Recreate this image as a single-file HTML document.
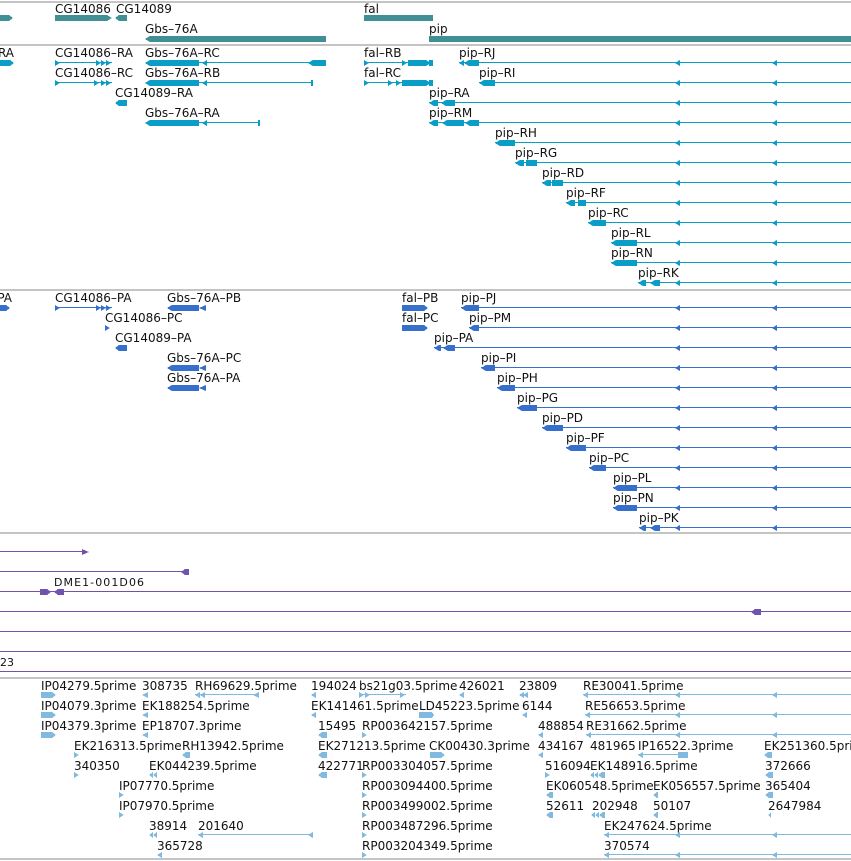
<!DOCTYPE html>
<html><head><meta charset="utf-8"><style>
html,body{margin:0;padding:0;background:#fff;width:851px;height:861px;overflow:hidden}
svg{display:block}
text{font-family:"DejaVu Sans","Liberation Sans",sans-serif;font-size:12px;fill:#111}
</style></head><body>
<svg width="851" height="861" viewBox="0 0 851 861" xmlns="http://www.w3.org/2000/svg" shape-rendering="crispEdges">
<g fill="#c4c4c4">
<rect x="0" y="1" width="851" height="2"/>
<rect x="0" y="44" width="851" height="2"/>
<rect x="0" y="289" width="851" height="2"/>
<rect x="0" y="532" width="851" height="2"/>
<rect x="0" y="677" width="851" height="2"/>
<rect x="0" y="858" width="851" height="2"/>
</g>

<g fill="#3f8f94">
<polygon points="0,15 9,15 13,18 9,21 0,21"/>
<polygon points="55,15 107,15 112,18 107,21 55,21"/>
<polygon points="115,18 119,15 127,15 127,21 119,21"/>
<polygon points="145,39 150,36 326,36 326,42 150,42"/>
<rect x="364" y="15" width="69" height="6"/>
<rect x="429" y="36" width="422" height="6"/>
</g>
<text x="55" y="13">CG14086</text>
<text x="116" y="13">CG14089</text>
<text x="145" y="33">Gbs–76A</text>
<text x="364" y="13">fal</text>
<text x="429" y="33">pip</text>

<g fill="#0a9dc5">
<polygon points="0,60 10,60 14,63 10,66 0,66"/>
<rect x="55" y="62" width="57" height="1"/><polygon points="55,60 60,63 55,66"/>
<polygon points="96,60 101,63 96,66"/><polygon points="101,60 106,63 101,66"/><polygon points="106,60 111,63 106,66"/>
<rect x="55" y="82" width="57" height="1"/><polygon points="55,80 60,83 55,86"/>
<polygon points="94,80 99,83 94,86"/><polygon points="101,80 106,83 101,86"/><polygon points="106,80 111,83 106,86"/>
<polygon points="145,63 150,60 199,60 199,66 150,66"/><rect x="199" y="62" width="110" height="1"/><polygon points="202,63 207,60 207,66"/>
<polygon points="308,63 313,60 326,60 326,66 313,66"/>
<polygon points="145,83 150,80 199,80 199,86 150,86"/><rect x="199" y="82" width="113" height="1"/><polygon points="202,83 207,80 207,86"/><rect x="311" y="80" width="2" height="6"/>
<polygon points="115,103 119,100 127,100 127,106 119,106"/>
<polygon points="145,123 150,120 199,120 199,126 150,126"/><rect x="199" y="122" width="60" height="1"/><polygon points="202,123 207,120 207,126"/><rect x="258" y="120" width="2" height="6"/>
<rect x="364" y="62" width="69" height="1"/><polygon points="364,60 369,63 364,66"/><polygon points="402,60 407,63 402,66"/><rect x="408" y="60" width="18" height="6"/><polygon points="426,60 431,63 426,66"/>
<rect x="364" y="82" width="69" height="1"/><polygon points="364,80 369,83 364,86"/><polygon points="388,80 393,83 388,86"/><polygon points="396,80 401,83 396,86"/><rect x="402" y="80" width="24" height="6"/><polygon points="426,80 431,83 426,86"/>
<rect x="429" y="60" width="4" height="6"/><rect x="429" y="80" width="4" height="6"/>
</g>
<g fill="#0a9dc5">
<rect x="459" y="62" width="392" height="1"/><polygon points="459,63 464,60 464,66"/><polygon points="464,63 469,60 469,66"/><rect x="469" y="60" width="10" height="6"/>
<rect x="479" y="82" width="372" height="1"/><polygon points="479,83 484,80 484,86"/><rect x="484" y="80" width="11" height="6"/>
<rect x="429" y="102" width="422" height="1"/><polygon points="429,103 434,100 438,100 438,106 434,106"/><polygon points="441,103 446,100 455,100 455,106 446,106"/>
<rect x="429" y="122" width="422" height="1"/><polygon points="429,123 434,120 438,120 438,126 434,126"/><polygon points="442,123 447,120 464,120 464,126 447,126"/><polygon points="465,123 470,120 479,120 479,126 470,126"/>
<rect x="495" y="142" width="356" height="1"/><polygon points="495,143 500,140 504,140 504,146 500,146"/><rect x="504" y="140" width="11" height="6"/>
<rect x="515" y="162" width="336" height="1"/><polygon points="515,163 520,160 524,160 524,166 520,166"/><rect x="526" y="160" width="11" height="6"/>
<rect x="542" y="182" width="309" height="1"/><polygon points="542,183 547,180 551,180 551,186 547,186"/><rect x="552" y="180" width="11" height="6"/>
<rect x="566" y="202" width="285" height="1"/><polygon points="566,203 571,200 575,200 575,206 571,206"/><rect x="578" y="200" width="8" height="6"/>
<rect x="588" y="222" width="263" height="1"/><polygon points="588,223 593,220 606,220 606,226 593,226"/>
<rect x="611" y="242" width="240" height="1"/><polygon points="611,243 616,240 637,240 637,246 616,246"/>
<rect x="611" y="262" width="240" height="1"/><polygon points="611,263 616,260 637,260 637,266 616,266"/>
<rect x="638" y="282" width="213" height="1"/><polygon points="638,283 643,280 646,280 646,286 643,286"/><polygon points="650,283 655,280 660,280 660,286 655,286"/>
</g>
<g fill="#0a9dc5">
<polygon points="675,63 680,60 680,66"/><polygon points="772,63 777,60 777,66"/>
<polygon points="675,83 680,80 680,86"/><polygon points="772,83 777,80 777,86"/>
<polygon points="675,103 680,100 680,106"/><polygon points="772,103 777,100 777,106"/>
<polygon points="675,123 680,120 680,126"/><polygon points="772,123 777,120 777,126"/>
<polygon points="675,143 680,140 680,146"/><polygon points="772,143 777,140 777,146"/>
<polygon points="675,163 680,160 680,166"/><polygon points="772,163 777,160 777,166"/>
<polygon points="675,183 680,180 680,186"/><polygon points="772,183 777,180 777,186"/>
<polygon points="675,203 680,200 680,206"/><polygon points="772,203 777,200 777,206"/>
<polygon points="675,223 680,220 680,226"/><polygon points="772,223 777,220 777,226"/>
<polygon points="675,243 680,240 680,246"/><polygon points="772,243 777,240 777,246"/>
<polygon points="675,263 680,260 680,266"/><polygon points="772,263 777,260 777,266"/>
<polygon points="675,283 680,280 680,286"/><polygon points="772,283 777,280 777,286"/>
</g>
<text x="14" y="57" text-anchor="end">RA</text>
<text x="55" y="57">CG14086–RA</text>
<text x="145" y="57">Gbs–76A–RC</text>
<text x="364" y="57">fal–RB</text>
<text x="459" y="57">pip–RJ</text>
<text x="55" y="77">CG14086–RC</text>
<text x="145" y="77">Gbs–76A–RB</text>
<text x="364" y="77">fal–RC</text>
<text x="479" y="77">pip–RI</text>
<text x="115" y="97">CG14089–RA</text>
<text x="429" y="97">pip–RA</text>
<text x="145" y="117">Gbs–76A–RA</text>
<text x="429" y="117">pip–RM</text>
<text x="495" y="137">pip–RH</text>
<text x="515" y="157">pip–RG</text>
<text x="542" y="177">pip–RD</text>
<text x="566" y="197">pip–RF</text>
<text x="588" y="217">pip–RC</text>
<text x="611" y="237">pip–RL</text>
<text x="611" y="257">pip–RN</text>
<text x="638" y="277">pip–RK</text>

<g fill="#3670cc">
<polygon points="0,305 6,305 10,308 6,311 0,311"/>
<rect x="55" y="307" width="57" height="1"/><polygon points="55,305 60,308 55,311"/><polygon points="96,305 101,308 96,311"/><polygon points="101,305 106,308 101,311"/><polygon points="106,305 111,308 106,311"/>
<polygon points="105,325 110,328 105,331"/>
<polygon points="115,348 119,345 127,345 127,351 119,351"/>
<polygon points="167,308 172,305 199,305 199,311 172,311"/><polygon points="199,308 206,305 206,311"/>
<polygon points="167,368 172,365 199,365 199,371 172,371"/><polygon points="199,368 206,365 206,371"/>
<polygon points="167,388 172,385 199,385 199,391 172,391"/><polygon points="199,388 206,385 206,391"/>
<rect x="402" y="305" width="22" height="6"/><polygon points="424,305 428,308 424,311"/>
<rect x="402" y="325" width="22" height="6"/><polygon points="424,325 428,328 424,331"/>
<rect x="461" y="307" width="390" height="1"/><polygon points="461,308 466,305 479,305 479,311 466,311"/>
<rect x="469" y="327" width="382" height="1"/><polygon points="469,328 474,325 479,325 479,331 474,331"/>
<rect x="434" y="347" width="417" height="1"/><polygon points="434,348 439,345 441,345 441,351 439,351"/><polygon points="443,348 448,345 455,345 455,351 448,351"/>
<rect x="481" y="367" width="370" height="1"/><polygon points="481,368 486,365 495,365 495,371 486,371"/>
<rect x="497" y="387" width="354" height="1"/><polygon points="497,388 502,385 515,385 515,391 502,391"/>
<rect x="517" y="407" width="334" height="1"/><polygon points="517,408 522,405 537,405 537,411 522,411"/>
<rect x="542" y="427" width="309" height="1"/><polygon points="542,428 547,425 563,425 563,431 547,431"/>
<rect x="566" y="447" width="285" height="1"/><polygon points="566,448 571,445 586,445 586,451 571,451"/>
<rect x="589" y="467" width="262" height="1"/><polygon points="589,468 594,465 606,465 606,471 594,471"/>
<rect x="613" y="487" width="238" height="1"/><polygon points="613,488 618,485 637,485 637,491 618,491"/>
<rect x="613" y="507" width="238" height="1"/><polygon points="613,508 618,505 637,505 637,511 618,511"/>
<rect x="639" y="527" width="212" height="1"/><polygon points="639,528 644,525 646,525 646,531 644,531"/><polygon points="650,528 655,525 660,525 660,531 655,531"/>
<polygon points="675,308 680,305 680,311"/><polygon points="772,308 777,305 777,311"/>
<polygon points="675,328 680,325 680,331"/><polygon points="772,328 777,325 777,331"/>
<polygon points="675,348 680,345 680,351"/><polygon points="772,348 777,345 777,351"/>
<polygon points="675,368 680,365 680,371"/><polygon points="772,368 777,365 777,371"/>
<polygon points="675,388 680,385 680,391"/><polygon points="772,388 777,385 777,391"/>
<polygon points="675,408 680,405 680,411"/><polygon points="772,408 777,405 777,411"/>
<polygon points="675,428 680,425 680,431"/><polygon points="772,428 777,425 777,431"/>
<polygon points="675,448 680,445 680,451"/><polygon points="772,448 777,445 777,451"/>
<polygon points="675,468 680,465 680,471"/><polygon points="772,468 777,465 777,471"/>
<polygon points="675,488 680,485 680,491"/><polygon points="772,488 777,485 777,491"/>
<polygon points="675,508 680,505 680,511"/><polygon points="772,508 777,505 777,511"/>
<polygon points="675,528 680,525 680,531"/><polygon points="772,528 777,525 777,531"/>
</g>
<text x="12" y="302" text-anchor="end">PA</text>
<text x="55" y="302">CG14086–PA</text>
<text x="167" y="302">Gbs–76A–PB</text>
<text x="402" y="302">fal–PB</text>
<text x="461" y="302">pip–PJ</text>
<text x="105" y="322">CG14086–PC</text>
<text x="402" y="322">fal–PC</text>
<text x="469" y="322">pip–PM</text>
<text x="115" y="342">CG14089–PA</text>
<text x="434" y="342">pip–PA</text>
<text x="167" y="362">Gbs–76A–PC</text>
<text x="481" y="362">pip–PI</text>
<text x="167" y="382">Gbs–76A–PA</text>
<text x="497" y="382">pip–PH</text>
<text x="517" y="402">pip–PG</text>
<text x="542" y="422">pip–PD</text>
<text x="566" y="442">pip–PF</text>
<text x="589" y="462">pip–PC</text>
<text x="613" y="482">pip–PL</text>
<text x="613" y="502">pip–PN</text>
<text x="639" y="522">pip–PK</text>

<g fill="#7053ad">
<rect x="0" y="551" width="84" height="1"/><polygon points="82,549 89,552 82,555"/>
<rect x="0" y="571" width="185" height="1"/><polygon points="181,572 185,569 189,569 189,575 185,575"/>
<rect x="0" y="591" width="851" height="1"/><polygon points="40,589 47,589 51,592 47,595 40,595"/><polygon points="54,592 58,589 64,589 64,595 58,595"/>
<rect x="0" y="611" width="851" height="1"/><polygon points="751,612 755,609 761,609 761,615 755,615"/>
<rect x="0" y="631" width="851" height="1"/>
<rect x="0" y="651" width="851" height="1"/>
<rect x="0" y="671" width="851" height="1"/>
</g>
<text x="54" y="586" style="font-size:11px" textLength="90">DME1-001D06</text>
<text x="0" y="666" style="font-size:11px">23</text>

<g fill="#82b9de">
<polygon points="41,692 52,692 56,695 52,698 41,698"/>
<polygon points="41,712 52,712 56,715 52,718 41,718"/>
<polygon points="41,732 52,732 56,735 52,738 41,738"/>
<polygon points="142,695 148,692 148,698"/>
<polygon points="142,715 148,712 148,718"/>
<polygon points="142,735 148,732 148,738"/>
<rect x="195" y="694" width="64" height="1"/><polygon points="195,695 200,692 200,698"/><polygon points="200,695 205,692 205,698"/><polygon points="253,695 259,692 259,698"/>
<polygon points="311,695 316,692 316,698"/>
<rect x="359" y="694" width="47" height="1"/><polygon points="359,692 364,695 359,698"/><polygon points="365,692 370,695 365,698"/><polygon points="400,692 405,695 400,698"/>
<polygon points="459,695 464,692 464,698"/>
<polygon points="519,695 524,692 524,698"/><polygon points="523,695 528,692 528,698"/>
<rect x="583" y="694" width="268" height="1"/><polygon points="583,695 588,692 588,698"/>
<polygon points="311,715 316,712 316,718"/>
<polygon points="419,712 432,712 434,715 432,718 419,718"/>
<polygon points="522,715 527,712 527,718"/>
<rect x="585" y="714" width="266" height="1"/><polygon points="585,715 590,712 590,718"/>
<polygon points="318,735 322,732 327,732 327,738 322,738"/>
<polygon points="362,732 367,735 362,738"/>
<polygon points="538,735 543,732 543,738"/>
<rect x="586" y="734" width="265" height="1"/><polygon points="586,735 591,732 591,738"/>
<polygon points="74,752 79,755 74,758"/>
<polygon points="182,755 186,752 190,752 190,758 186,758"/>
<polygon points="318,755 322,752 327,752 327,758 322,758"/>
<polygon points="430,752 441,752 445,755 441,758 430,758"/>
<polygon points="538,755 543,752 543,758"/>
<rect x="638" y="754" width="50" height="1"/><polygon points="638,755 643,752 643,758"/><rect x="678" y="752" width="10" height="6"/>
<polygon points="764,755 768,752 772,752 772,758 768,758"/>
<polygon points="74,772 79,775 74,778"/>
<polygon points="149,775 153,772 153,778"/><polygon points="153,775 157,772 157,778"/>
<polygon points="318,775 322,772 327,772 327,778 322,778"/>
<polygon points="362,772 367,775 362,778"/>
<polygon points="545,772 550,775 545,778"/>
<polygon points="590,775 594,772 594,778"/><polygon points="594,775 598,772 598,778"/><polygon points="598,775 602,772 605,772 605,778 602,778"/>
<polygon points="765,775 769,772 773,772 773,778 769,778"/>
<polygon points="119,792 124,795 119,798"/>
<polygon points="362,792 367,795 362,798"/>
<polygon points="546,795 550,792 553,792 553,798 550,798"/>
<polygon points="653,795 657,792 658,792 658,798 657,798"/>
<polygon points="765,795 769,792 773,792 773,798 769,798"/>
<polygon points="119,812 124,815 119,818"/>
<polygon points="362,812 367,815 362,818"/>
<polygon points="546,815 550,812 553,812 553,818 550,818"/>
<polygon points="591,815 595,812 595,818"/><polygon points="595,815 599,812 599,818"/><polygon points="599,815 603,812 605,812 605,818 603,818"/>
<polygon points="653,815 657,812 658,812 658,818 657,818"/>
<polygon points="768,815 771,812 771,818"/>
<polygon points="149,835 153,832 153,838"/><polygon points="153,835 157,832 157,838"/>
<rect x="198" y="834" width="115" height="1"/><polygon points="198,835 203,832 203,838"/><polygon points="308,835 313,832 313,838"/>
<polygon points="362,832 367,835 362,838"/>
<rect x="604" y="834" width="247" height="1"/><polygon points="604,835 609,832 609,838"/>
<polygon points="157,855 162,852 162,858"/>
<polygon points="362,852 367,855 362,858"/>
<rect x="604" y="854" width="247" height="1"/><polygon points="604,855 609,852 609,858"/>
<polygon points="675,695 680,692 680,698"/><polygon points="772,695 777,692 777,698"/>
<polygon points="675,715 680,712 680,718"/><polygon points="772,715 777,712 777,718"/>
<polygon points="675,735 680,732 680,738"/><polygon points="772,735 777,732 777,738"/>
<polygon points="675,835 680,832 680,838"/><polygon points="772,835 777,832 777,838"/>
<polygon points="675,855 680,852 680,858"/><polygon points="772,855 777,852 777,858"/>
</g>
<text x="41" y="690">IP04279.5prime</text>
<text x="142" y="690">308735</text>
<text x="195" y="690">RH69629.5prime</text>
<text x="311" y="690">194024</text>
<text x="359" y="690">bs21g03.5prime</text>
<text x="459" y="690">426021</text>
<text x="519" y="690">23809</text>
<text x="583" y="690">RE30041.5prime</text>
<text x="41" y="710">IP04079.3prime</text>
<text x="142" y="710">EK188254.5prime</text>
<text x="311" y="710">EK141461.5prime</text>
<text x="419" y="710">LD45223.5prime</text>
<text x="522" y="710">6144</text>
<text x="585" y="710">RE56653.5prime</text>
<text x="41" y="730">IP04379.3prime</text>
<text x="142" y="730">EP18707.3prime</text>
<text x="318" y="730">15495</text>
<text x="362" y="730">RP003642157.5prime</text>
<text x="538" y="730">488854</text>
<text x="586" y="730">RE31662.5prime</text>
<text x="74" y="750">EK216313.5prime</text>
<text x="182" y="750">RH13942.5prime</text>
<text x="318" y="750">EK271213.5prime</text>
<text x="429" y="750">CK00430.3prime</text>
<text x="538" y="750">434167</text>
<text x="590" y="750">481965</text>
<text x="638" y="750">IP16522.3prime</text>
<text x="764" y="750">EK251360.5prime</text>
<text x="74" y="770">340350</text>
<text x="149" y="770">EK044239.5prime</text>
<text x="318" y="770">422771</text>
<text x="362" y="770">RP003304057.5prime</text>
<text x="545" y="770">516094</text>
<text x="590" y="770">EK148916.5prime</text>
<text x="765" y="770">372666</text>
<text x="119" y="790">IP07770.5prime</text>
<text x="362" y="790">RP003094400.5prime</text>
<text x="546" y="790">EK060548.5prime</text>
<text x="653" y="790">EK056557.5prime</text>
<text x="765" y="790">365404</text>
<text x="119" y="810">IP07970.5prime</text>
<text x="362" y="810">RP003499002.5prime</text>
<text x="546" y="810">52611</text>
<text x="592" y="810">202948</text>
<text x="653" y="810">50107</text>
<text x="768" y="810">2647984</text>
<text x="149" y="830">38914</text>
<text x="198" y="830">201640</text>
<text x="362" y="830">RP003487296.5prime</text>
<text x="604" y="830">EK247624.5prime</text>
<text x="157" y="850">365728</text>
<text x="362" y="850">RP003204349.5prime</text>
<text x="604" y="850">370574</text>
</svg>
</body></html>
